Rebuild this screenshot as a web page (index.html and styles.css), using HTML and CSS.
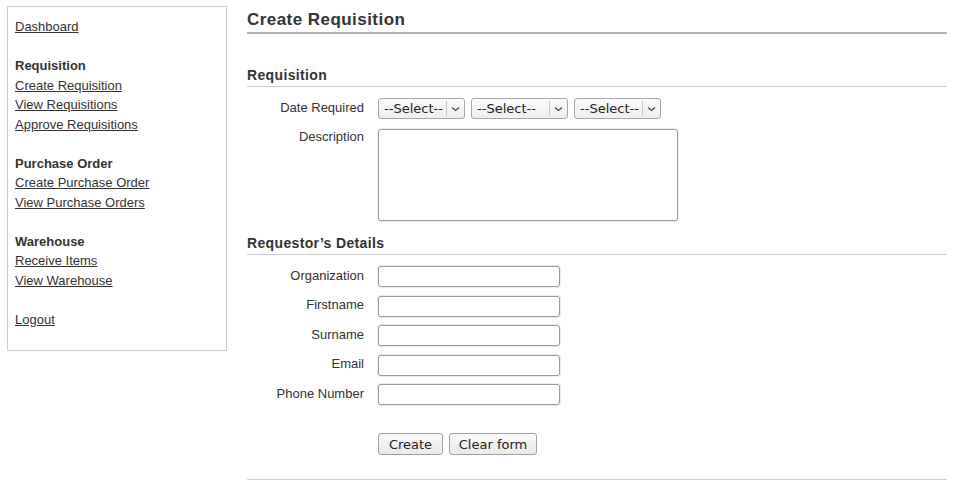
FILE: index.html
```html
<!DOCTYPE html>
<html>
<head>
  <title>Create Requisition</title>
  <link rel="stylesheet" href="styles.css">
</head>
<body>
  <div class="page">
    <div class="sidebar">
      <a href="#">Dashboard</a>
      <div class="blank"></div>
      <strong>Requisition</strong>
      <a href="#">Create Requisition</a>
      <a href="#">View Requisitions</a>
      <a href="#">Approve Requisitions</a>
      <div class="blank"></div>
      <strong>Purchase Order</strong>
      <a href="#">Create Purchase Order</a>
      <a href="#">View Purchase Orders</a>
      <div class="blank"></div>
      <strong>Warehouse</strong>
      <a href="#">Receive Items</a>
      <a href="#">View Warehouse</a>
      <div class="blank"></div>
      <a href="#">Logout</a>
    </div>

    <div class="main">
      <h1>Create Requisition</h1>

      <form>
        <h2 class="first">Requisition</h2>
        <div class="row">
          <label>Date Required</label>
          <div class="selects">
            <span class="select-wrap w87">
              <select><option>--Select--</option></select>
              <span class="arrow"><svg width="9" height="6" viewBox="0 0 9 6"><path d="M1 1.5 L4.5 4.5 L8 1.5" fill="none" stroke="#444" stroke-width="1.2"/></svg></span>
            </span>
            <span class="select-wrap w97">
              <select><option>--Select--</option></select>
              <span class="arrow"><svg width="9" height="6" viewBox="0 0 9 6"><path d="M1 1.5 L4.5 4.5 L8 1.5" fill="none" stroke="#444" stroke-width="1.2"/></svg></span>
            </span>
            <span class="select-wrap w87">
              <select><option>--Select--</option></select>
              <span class="arrow"><svg width="9" height="6" viewBox="0 0 9 6"><path d="M1 1.5 L4.5 4.5 L8 1.5" fill="none" stroke="#444" stroke-width="1.2"/></svg></span>
            </span>
          </div>
        </div>
        <div class="row top">
          <label>Description</label>
          <textarea></textarea>
        </div>

        <h2>Requestor’s Details</h2>
        <div class="row"><label>Organization</label><input type="text"></div>
        <div class="row"><label>Firstname</label><input type="text"></div>
        <div class="row"><label>Surname</label><input type="text"></div>
        <div class="row"><label>Email</label><input type="text"></div>
        <div class="row"><label>Phone Number</label><input type="text"></div>

        <div class="row buttons">
          <label></label>
          <button type="button" class="create">Create</button>
          <button type="reset" class="clear">Clear form</button>
        </div>
      </form>

      <hr>
    </div>
  </div>
</body>
</html>
```

FILE: styles.css
```css
body {
  margin: 0;
  padding: 6px 10px 0 7px;
  font-family: "Liberation Sans", Arial, sans-serif;
  font-size: 13px;
  color: #333;
  background: #fff;
}

.page {
  display: flex;
  gap: 20px;
  align-items: flex-start;
}

.sidebar {
  width: 204px;
  flex: none;
  border: 1px solid #ccc;
  padding: 10px 7px 21px 7px;
  display: flex;
  flex-direction: column;
  align-items: flex-start;
  line-height: 19.5px;
}

.sidebar a {
  color: #333;
  text-decoration: underline;
}

.sidebar strong {
  font-weight: bold;
}

.sidebar .blank {
  height: 19.5px;
}

.main {
  flex: 1;
}

h1 {
  margin: 0;
  font-size: 17px;
  letter-spacing: 0.45px;
  line-height: 20px;
  padding: 4px 0 2px 0;
  border-bottom: 2px solid #b3b3b3;
}

h2 {
  margin: 13px 0 11px 0;
  font-size: 14px;
  letter-spacing: 0.35px;
  line-height: 18px;
  padding-bottom: 2px;
  border-bottom: 1px solid #d0d0d0;
}

h2.first {
  margin-top: 32px;
}

.row {
  display: flex;
  align-items: center;
  gap: 14px;
  margin-bottom: 8.5px;
}

.row.top {
  align-items: flex-start;
  margin-top: 10px;
}

.row.top label {
  padding: 0;
}

.row label {
  width: 117px;
  flex: none;
  text-align: right;
  line-height: 15px;
  padding-bottom: 3px;
}

.selects {
  display: flex;
  gap: 6px;
}

.select-wrap {
  position: relative;
  display: inline-block;
  height: 21px;
}

.select-wrap.w87 { width: 87px; }
.select-wrap.w97 { width: 97px; }

.select-wrap select {
  appearance: none;
  -webkit-appearance: none;
  width: 100%;
  height: 21px;
  box-sizing: border-box;
  border: 1px solid #a8a8a8;
  border-radius: 3px;
  background: linear-gradient(#fbfbfb, #eeeeee);
  font-family: "DejaVu Sans", sans-serif;
  font-size: 13px;
  color: #222;
  padding: 0 0 0 5px;
  margin: 0;
}

.select-wrap .arrow {
  position: absolute;
  right: 1px;
  top: 3px;
  bottom: 3px;
  width: 17px;
  border-left: 1px solid #c8c8c8;
  display: flex;
  align-items: center;
  justify-content: center;
  pointer-events: none;
}

textarea {
  width: 300px;
  height: 92px;
  box-sizing: border-box;
  border: 1px solid #9a9a9a;
  border-radius: 3px;
  box-shadow: 0 0 0 1px #ececec;
  resize: none;
  margin: 0;
  padding: 2px;
}

input[type="text"] {
  width: 182px;
  height: 21px;
  box-sizing: border-box;
  border: 1px solid #9a9a9a;
  border-radius: 3px;
  box-shadow: 0 0 0 1px #ececec;
  margin: 0;
  padding: 0 3px;
}

.row.buttons {
  margin-top: 28px;
  gap: 0;
}

.row.buttons label {
  margin-right: 14px;
}

button {
  height: 22px;
  box-sizing: border-box;
  border: 1px solid #a0a0a0;
  border-radius: 3px;
  background: linear-gradient(#fafafa, #e9e9e9);
  font-family: "DejaVu Sans", sans-serif;
  font-size: 13px;
  color: #222;
  padding: 0;
  margin: 0 6px 0 0;
}

button.create { width: 65px; }
button.clear { width: 88px; }

hr {
  border: 0;
  border-top: 1px solid #d0d0d0;
  margin: 24px 0 0 0;
}
```
